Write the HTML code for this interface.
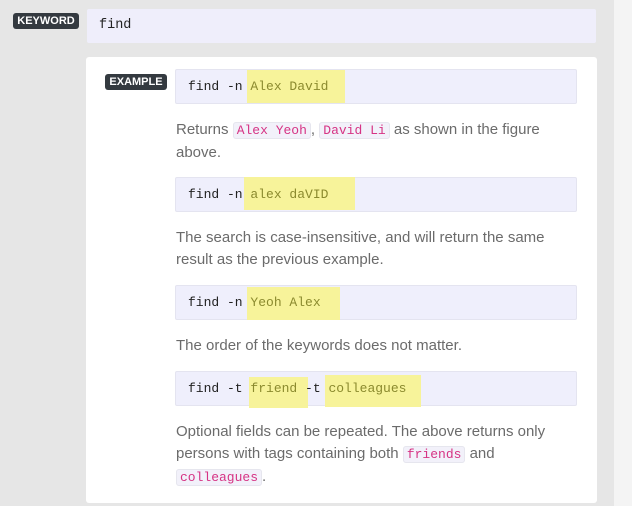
<!DOCTYPE html>
<html><head><style>
*{margin:0;padding:0;box-sizing:border-box}
body{width:632px;height:506px;background:#e6e6e6;position:relative;overflow:hidden;font-family:"Liberation Sans",sans-serif}
.a{position:absolute}
.badge{background:#343a40;color:#fff;font-weight:bold;font-size:11px;border-radius:3px;text-align:center;line-height:16px}
.code{background:#efeffc;border:1px solid #e4e4f0;border-radius:2px;font-family:"Liberation Mono",monospace;font-size:13px;color:#222}
.hl{background:#f7f39a}
.mono{font-family:"Liberation Mono",monospace;font-size:13px;color:#8b8a2e;line-height:20px}
.p{font-size:15px;color:#6b6b6b;line-height:22px;left:176px;width:372px}
.ic{font-family:"Liberation Mono",monospace;font-size:13px;color:#d63384;background:#f2f1fa;border:1px solid #e6e6ee;border-radius:3px;padding:0 3px}
</style></head><body>
<div class="a" style="left:614px;top:0;width:18px;height:506px;background:#f4f4f4"></div>
<div class="a badge" style="left:13px;top:13px;width:66px">KEYWORD</div>
<div class="a code" style="left:87px;top:9px;width:509px;height:34px;border:none;background:#efeefb;padding:7px 12px;line-height:20px;font-size:13.5px">find</div>
<div class="a" style="left:86px;top:57px;width:511px;height:446px;background:#fff;border-radius:3px"></div>
<div class="a badge" style="left:105px;top:74px;width:62px">EXAMPLE</div>

<div class="a code" style="left:175px;top:69px;width:402px;height:35px"></div>
<div class="a hl" style="left:247px;top:70px;width:98px;height:33px"></div>
<div class="a mono" style="left:188px;top:77px;color:#222">find -n <span style="color:#8b8a2e">Alex David</span></div>
<div class="a p" style="top:119px">Returns <span class="ic">Alex Yeoh</span>, <span class="ic">David Li</span> as shown in the figure above.</div>

<div class="a code" style="left:175px;top:177px;width:402px;height:35px"></div>
<div class="a hl" style="left:244px;top:177px;width:111px;height:33px"></div>
<div class="a mono" style="left:188px;top:185px;color:#222">find -n <span style="color:#8b8a2e">alex daVID</span></div>
<div class="a p" style="top:227px">The search is case-insensitive, and will return the same result as the previous example.</div>

<div class="a code" style="left:175px;top:285px;width:402px;height:35px"></div>
<div class="a hl" style="left:247px;top:287px;width:93px;height:33px"></div>
<div class="a mono" style="left:188px;top:293px;color:#222">find -n <span style="color:#8b8a2e">Yeoh Alex</span></div>
<div class="a p" style="top:335px">The order of the keywords does not matter.</div>

<div class="a code" style="left:175px;top:371px;width:402px;height:35px"></div>
<div class="a hl" style="left:249px;top:377px;width:59px;height:31px"></div>
<div class="a hl" style="left:325px;top:375px;width:96px;height:32px"></div>
<div class="a mono" style="left:188px;top:379px;color:#222">find -t <span style="color:#8b8a2e">friend </span>-t <span style="color:#8b8a2e">colleagues</span></div>
<div class="a p" style="top:421px">Optional fields can be repeated. The above returns only persons with tags containing both <span class="ic">friends</span> and <span class="ic">colleagues</span>.</div>
</body></html>
